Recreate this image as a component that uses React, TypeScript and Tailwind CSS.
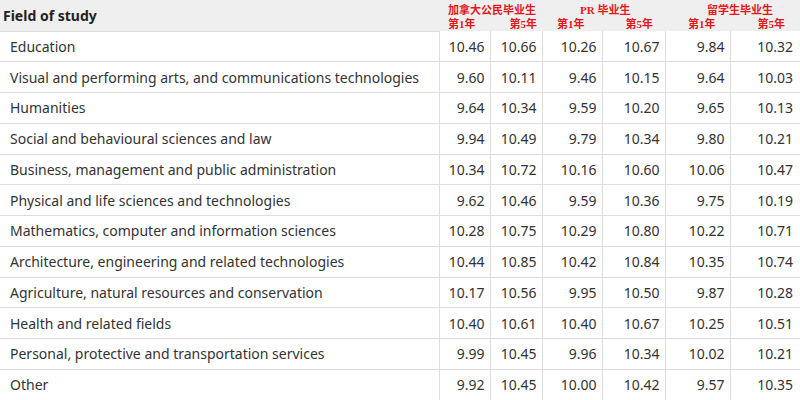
import React from 'react';

interface Row {
  field: string;
  values: string[];
}

const rows: Row[] = [
  { field: 'Education', values: ['10.46', '10.66', '10.26', '10.67', '9.84', '10.32'] },
  { field: 'Visual and performing arts, and communications technologies', values: ['9.60', '10.11', '9.46', '10.15', '9.64', '10.03'] },
  { field: 'Humanities', values: ['9.64', '10.34', '9.59', '10.20', '9.65', '10.13'] },
  { field: 'Social and behavioural sciences and law', values: ['9.94', '10.49', '9.79', '10.34', '9.80', '10.21'] },
  { field: 'Business, management and public administration', values: ['10.34', '10.72', '10.16', '10.60', '10.06', '10.47'] },
  { field: 'Physical and life sciences and technologies', values: ['9.62', '10.46', '9.59', '10.36', '9.75', '10.19'] },
  { field: 'Mathematics, computer and information sciences', values: ['10.28', '10.75', '10.29', '10.80', '10.22', '10.71'] },
  { field: 'Architecture, engineering and related technologies', values: ['10.44', '10.85', '10.42', '10.84', '10.35', '10.74'] },
  { field: 'Agriculture, natural resources and conservation', values: ['10.17', '10.56', '9.95', '10.50', '9.87', '10.28'] },
  { field: 'Health and related fields', values: ['10.40', '10.61', '10.40', '10.67', '10.25', '10.51'] },
  { field: 'Personal, protective and transportation services', values: ['9.99', '10.45', '9.96', '10.34', '10.02', '10.21'] },
  { field: 'Other', values: ['9.92', '10.45', '10.00', '10.42', '9.57', '10.35'] },
];

const cjk = "font-['Liberation_Serif','Noto_Sans_CJK_SC',serif]";

export default function App() {
  return (
    <div className="w-[800px] h-[400px] overflow-hidden bg-white font-['Noto_Sans',sans-serif] text-[14px] text-[#333]">
      <table className="w-[800px] table-fixed border-collapse">
        <colgroup>
          <col className="w-[439px]" />
          <col className="w-[51px]" />
          <col className="w-[52px]" />
          <col className="w-[60px]" />
          <col className="w-[63px]" />
          <col className="w-[65px]" />
          <col className="w-[70px]" />
        </colgroup>
        <thead>
          <tr className="h-[31px] bg-[#efefef]">
            <th className="border-b border-[#dedede] pl-[3px] text-left align-middle font-bold text-[14px] text-[#222]">
              Field of study
            </th>
            <th colSpan={2} className={`p-0 align-top text-[11px] leading-[14px] font-bold text-[#e5161c] ${cjk}`}>
              <div className="pt-[3px] pl-[9px] text-left">加拿大公民毕业生</div>
              <div className="flex">
                <span className="ml-[9px]">第1年</span>
                <span className="ml-auto mr-[5px]">第5年</span>
              </div>
            </th>
            <th colSpan={2} className={`p-0 align-top text-[11px] leading-[14px] font-bold text-[#e5161c] ${cjk}`}>
              <div className="pt-[3px] pl-[38px] text-left">PR 毕业生</div>
              <div className="flex">
                <span className="ml-[15px]">第1年</span>
                <span className="ml-auto mr-[12px]">第5年</span>
              </div>
            </th>
            <th colSpan={2} className={`p-0 align-top text-[11px] leading-[14px] font-bold text-[#e5161c] ${cjk}`}>
              <div className="pt-[3px] pl-[42px] text-left">留学生毕业生</div>
              <div className="flex">
                <span className="ml-[23px]">第1年</span>
                <span className="ml-auto mr-[15px]">第5年</span>
              </div>
            </th>
          </tr>
        </thead>
        <tbody>
          {rows.map((row) => (
            <tr key={row.field} className="h-[30.75px]">
              <td className="border-b border-[#dedede] pl-[10px] whitespace-nowrap">{row.field}</td>
              {row.values.map((v, i) => (
                <td
                  key={i}
                  className={`border-b border-l border-[#dedede] text-right ${i === 5 ? 'pr-[7px]' : 'pr-[5px]'}`}
                >
                  {v}
                </td>
              ))}
            </tr>
          ))}
        </tbody>
      </table>
    </div>
  );
}
